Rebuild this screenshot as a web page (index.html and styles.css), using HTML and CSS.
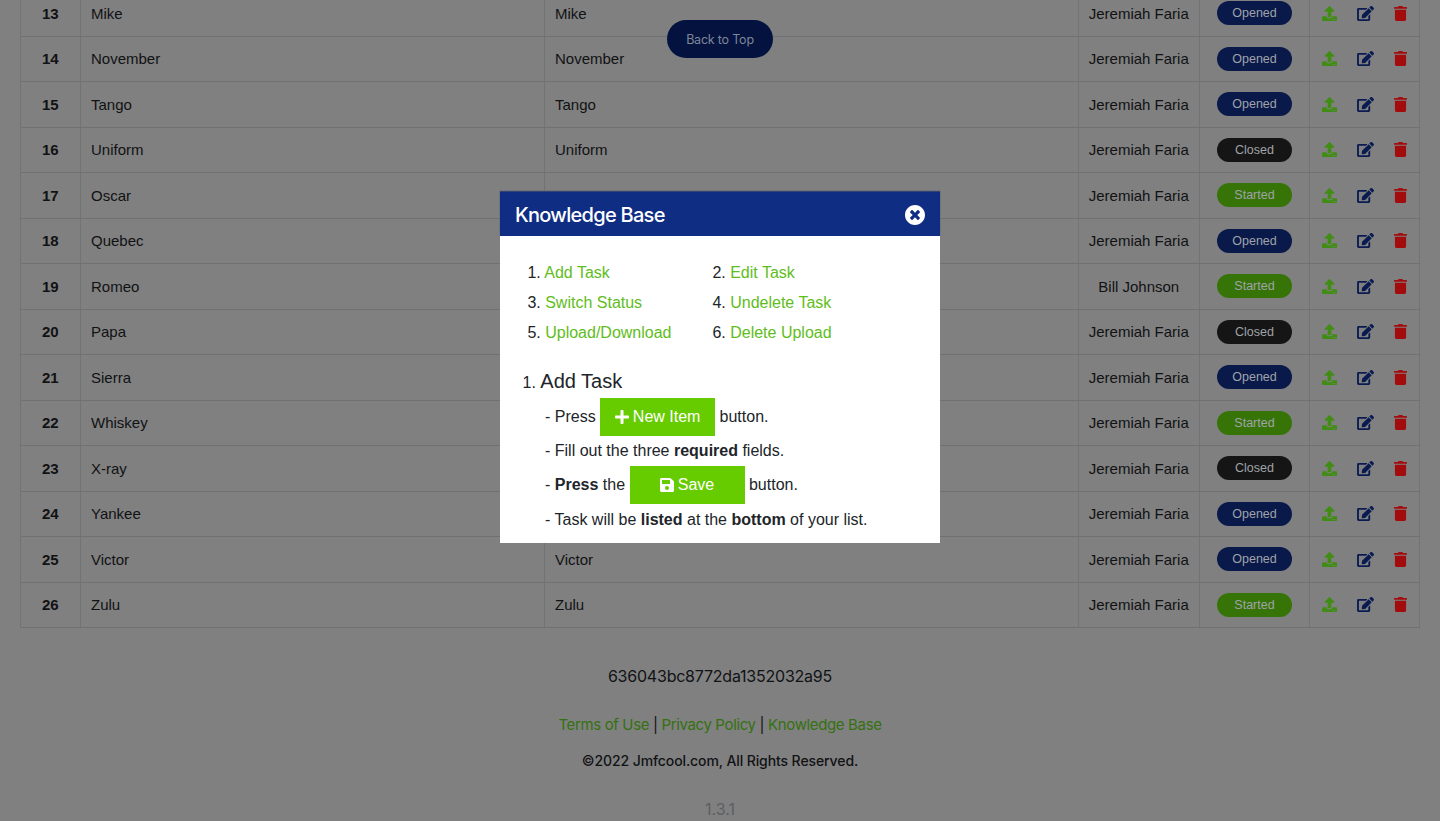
FILE: index.html
```html
<!DOCTYPE html>
<html lang="en">
<head>
<meta charset="utf-8">
<title>Knowledge Base</title>
<link rel="stylesheet" href="styles.css">
</head>
<body>
<svg class="sprite" aria-hidden="true">
  <symbol id="upload" viewBox="0 0 512 512"><path d="M296 384h-80c-13.3 0-24-10.7-24-24V192h-87.7c-17.8 0-26.7-21.5-14.1-34.1L242.3 5.7c7.5-7.5 19.8-7.5 27.3 0l152.2 152.2c12.6 12.6 3.7 34.1-14.1 34.1H320v168c0 13.3-10.7 24-24 24zm216-8v112c0 13.3-10.7 24-24 24H24c-13.3 0-24-10.7-24-24V376c0-13.3 10.7-24 24-24h136v8c0 30.9 25.1 56 56 56h80c30.9 0 56-25.1 56-56v-8h136c13.3 0 24 10.7 24 24zm-124 88c0-11-9-20-20-20s-20 9-20 20 9 20 20 20 20-9 20-20zm64 0c0-11-9-20-20-20s-20 9-20 20 9 20 20 20 20-9 20-20z"/></symbol>
  <symbol id="edit" viewBox="0 0 576 512"><path d="M402.6 83.2l90.2 90.2c3.8 3.8 3.8 10 0 13.8L274.4 405.6l-92.8 10.3c-12.4 1.4-22.9-9.1-21.5-21.5l10.3-92.8L388.8 83.2c3.8-3.8 10-3.8 13.8 0zm162-22.9l-48.8-48.8c-15.2-15.2-39.9-15.2-55.2 0l-35.4 35.4c-3.8 3.8-3.8 10 0 13.8l90.2 90.2c3.8 3.8 10 3.8 13.8 0l35.4-35.4c15.2-15.3 15.2-40 0-55.2zM384 346.2V448H64V128h229.8c3.2 0 6.2-1.3 8.5-3.5l40-40c7.6-7.6 2.2-20.5-8.5-20.5H48C21.5 64 0 85.5 0 112v352c0 26.5 21.5 48 48 48h352c26.5 0 48-21.5 48-48V306.2c0-10.7-12.9-16-20.5-8.5l-40 40c-2.2 2.3-3.5 5.3-3.5 8.5z"/></symbol>
  <symbol id="trash" viewBox="0 0 448 512"><path d="M432 32H312l-9.4-18.7A24 24 0 0 0 281.1 0H166.8a23.72 23.72 0 0 0-21.4 13.3L136 32H16A16 16 0 0 0 0 48v32a16 16 0 0 0 16 16h416a16 16 0 0 0 16-16V48a16 16 0 0 0-16-16zM32 128V464a48 48 0 0 0 48 48h288a48 48 0 0 0 48-48V128z"/></symbol>
  <symbol id="close" viewBox="8 8 496 496"><path d="M256 8C119 8 8 119 8 256s111 248 248 248 248-111 248-248S393 8 256 8zm121.6 313.1c4.7 4.7 4.7 12.3 0 17L338 377.6c-4.7 4.7-12.3 4.7-17 0L256 312l-65.1 65.6c-4.7 4.7-12.3 4.7-17 0L134.4 338c-4.7-4.7-4.7-12.3 0-17l65.6-65-65.6-65.1c-4.7-4.7-4.7-12.3 0-17l39.6-39.6c4.7-4.7 12.3-4.7 17 0l65 65.7 65.1-65.6c4.7-4.7 12.3-4.7 17 0l39.6 39.6c4.7 4.7 4.7 12.3 0 17L312 256l65.6 65.1z"/></symbol>
  <symbol id="plus" viewBox="0 0 448 512"><path d="M416 208H272V64c0-17.67-14.33-32-32-32h-32c-17.67 0-32 14.33-32 32v144H32c-17.67 0-32 14.33-32 32v32c0 17.67 14.33 32 32 32h144v144c0 17.67 14.33 32 32 32h32c17.67 0 32-14.33 32-32V304h144c17.67 0 32-14.33 32-32v-32c0-17.67-14.33-32-32-32z"/></symbol>
  <symbol id="save" viewBox="0 0 448 512"><path d="M433.941 129.941l-83.882-83.882A48 48 0 0 0 316.118 32H48C21.49 32 0 53.49 0 80v352c0 26.51 21.49 48 48 48h352c26.51 0 48-21.49 48-48V163.882a48 48 0 0 0-14.059-33.941zM224 416c-35.346 0-64-28.654-64-64 0-35.346 28.654-64 64-64s64 28.654 64 64c0 35.346-28.654 64-64 64zm96-304.52V212c0 6.627-5.373 12-12 12H76c-6.627 0-12-5.373-12-12V108c0-6.627 5.373-12 12-12h228.52c3.183 0 6.235 1.264 8.485 3.515l3.48 3.48A11.996 11.996 0 0 1 320 111.48z"/></symbol>
</svg>

<main class="task-list" id="tasks"></main>

<footer class="footer">
  <div class="list-id">636043bc8772da1352032a95</div>
  <div class="footer-links"><a>Terms of Use</a> | <a>Privacy Policy</a> | <a>Knowledge Base</a></div>
  <div class="copyright">©2022 Jmfcool.com, All Rights Reserved.</div>
  <div class="version">1.3.1</div>
</footer>

<button class="back-to-top">Back to Top</button>

<section class="modal">
  <header class="modal-header">
    <h2 class="modal-title">Knowledge Base</h2>
    <svg class="modal-close"><use href="#close"/></svg>
  </header>
  <div class="modal-body">
    <div class="topics">
      <div>1. <a>Add Task</a></div><div>2. <a>Edit Task</a></div>
      <div>3. <a>Switch Status</a></div><div>4. <a>Undelete Task</a></div>
      <div>5. <a>Upload/Download</a></div><div>6. <a>Delete Upload</a></div>
    </div>
    <h3 class="topic-title"><span class="topic-number">1.</span> Add Task</h3>
    <div class="steps">
      <div class="step step-button">- Press <span class="button"><svg class="button-icon"><use href="#plus"/></svg>New Item</span> button.</div>
      <div class="step">- Fill out the three <b>required</b> fields.</div>
      <div class="step step-button">- <b>Press</b> the <span class="button"><svg class="button-icon"><use href="#save"/></svg>Save</span> button.</div>
      <div class="step">- Task will be <b>listed</b> at the <b>bottom</b> of your list.</div>
    </div>
  </div>
</section>
<script src="tasks.js"></script>
</body>
</html>
```
FILE: styles.css
```css
* { box-sizing: border-box; }

body {
  margin: 0;
  height: 821px;
  overflow: hidden;
  background: #808080;
  color: #111214;
  font-family: "Liberation Sans", Arial, sans-serif;
  font-size: 15px;
}

.sprite { display: none; }

.task-list {
  width: 1400px;
  height: 637px;
  margin: -9px auto 0;
  border-left: 1px solid #727374;
}

.row {
  display: grid;
  grid-template-columns: 59.5px 464px 534px 121.5px 110px 110px;
  height: 45.5px;
  border-bottom: 1px solid #707172;
}

.cell {
  display: flex;
  align-items: center;
  padding-left: 10.5px;
  border-right: 1px solid #727374;
}

.cell-center { justify-content: center; padding: 0; }
.cell-number { font-weight: bold; }

.status {
  width: 75px;
  height: 24px;
  border-radius: 12px;
  color: #a0a3a9;
  font-size: 12.5px;
  line-height: 24px;
  text-align: center;
}
.status-opened { background: #08194a; }
.status-closed { background: #151515; }
.status-started { background: #367407; }

.cell-actions { padding-left: 12px; }
.icon { display: block; fill: currentColor; height: 15px; flex: none; }
.icon-upload { width: 15px; color: #418c14; }
.icon-edit { width: 17px; margin-left: 20px; color: #0a1b52; }
.icon-trash { width: 13px; margin-left: 20px; color: #a30c0c; }

.footer {
  display: flex;
  flex-direction: column;
  align-items: center;
  font-family: Inter, sans-serif;
}
.list-id { margin-top: 38px; font-size: 16px; line-height: 20px; letter-spacing: -0.22px; }
.footer-links { margin-top: 29px; font-size: 15px; line-height: 20px; letter-spacing: -0.36px; }
.footer-links a { color: #357011; }
.copyright { margin-top: 16px; font-size: 14px; font-weight: 500; line-height: 20px; letter-spacing: -0.1px; }
.version { margin-top: 28px; color: #5d5e60; font-size: 16px; line-height: 20px; }

.back-to-top {
  position: absolute;
  top: 20px;
  left: 667px;
  width: 106px;
  height: 38px;
  padding: 0;
  border: 0;
  border-radius: 19px;
  background: #03123f;
  color: #7e8798;
  font: 12.5px Inter, sans-serif;
  letter-spacing: -0.2px;
}

.modal {
  position: absolute;
  top: 192px;
  left: 500px;
  width: 440px;
  height: 351px;
  background: #fff;
  color: #212529;
  font-size: 16px;
}
.modal-header {
  display: flex;
  align-items: center;
  justify-content: space-between;
  height: 44px;
  padding: 1px 15px 0;
  background: #102d84;
  box-shadow: 0 -1px 1px #344575;
  color: #fff;
}
.modal-title { margin: 0; font: 500 20px/24px Inter, sans-serif; letter-spacing: -0.72px; }
.modal-close { width: 20px; height: 20px; fill: #fff; }
.modal-body { padding: 21.5px 15px 0; }

.topics {
  display: grid;
  grid-template-columns: 185px 185px;
  padding-left: 12.4px;
  line-height: 30px;
}
.topics a { color: #60bd20; }
.topic-title { margin: 21px 0 0 7.5px; font-size: 20px; font-weight: normal; line-height: 24px; }
.topic-number { font-size: 16px; }
.steps { padding: 3px 0 0 30px; }
.step { display: flex; align-items: center; height: 30px; white-space: pre; }
.step-button { height: 38.5px; }
.button {
  display: flex;
  align-items: center;
  justify-content: center;
  gap: 4px;
  width: 115px;
  height: 38px;
  background: #66cc00;
  color: #fff;
}
.button-icon { width: 14px; height: 16px; fill: #fff; }
```
FILE: tasks.js
```js
const tasks = [
  [13, "Mike", "Mike", "Opened"],
  [14, "November", "November", "Opened"],
  [15, "Tango", "Tango", "Opened"],
  [16, "Uniform", "Uniform", "Closed"],
  [17, "Oscar", "Oscar", "Started"],
  [18, "Quebec", "", "Opened"],
  [19, "Romeo", "", "Started", "Bill Johnson"],
  [20, "Papa", "", "Closed"],
  [21, "Sierra", "", "Opened"],
  [22, "Whiskey", "", "Started"],
  [23, "X-ray", "", "Closed"],
  [24, "Yankee", "", "Opened"],
  [25, "Victor", "Victor", "Opened"],
  [26, "Zulu", "Zulu", "Started"]
];

const icon = name => `<svg class="icon icon-${name}"><use href="#${name}"/></svg>`;

document.getElementById("tasks").innerHTML = tasks.map(([number, name, description, status, owner = "Jeremiah Faria"]) => `
  <div class="row">
    <div class="cell cell-center cell-number">${number}</div>
    <div class="cell">${name}</div>
    <div class="cell">${description}</div>
    <div class="cell cell-center">${owner}</div>
    <div class="cell cell-center"><span class="status status-${status.toLowerCase()}">${status}</span></div>
    <div class="cell cell-actions">${icon("upload")}${icon("edit")}${icon("trash")}</div>
  </div>`).join("");
```
